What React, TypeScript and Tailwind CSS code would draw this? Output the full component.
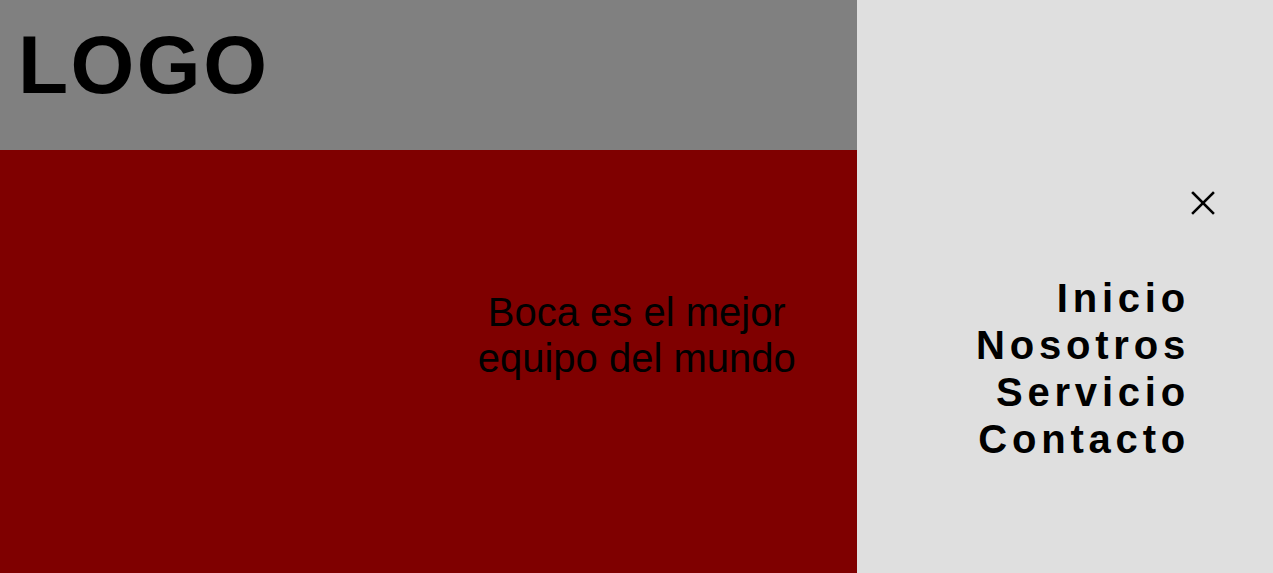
import React from "react";

export default function App() {
  return (
    <div
      className="flex h-[573px] w-[1273px] overflow-hidden"
      style={{ fontFamily: '"Liberation Sans", Arial, sans-serif' }}
    >
      <div className="flex w-[857px] flex-col">
        <header className="h-[150px] bg-[#808080] pl-[18px] pt-[18px]">
          <h1 className="text-[82px] font-bold leading-[1.15] tracking-[2.5px] text-black">
            LOGO
          </h1>
        </header>
        <main className="grid flex-1 grid-cols-2 bg-[#7f0000] pt-[139px]">
          <div />
          <p className="pr-[12px] text-center text-[40px] leading-[1.15] text-black">
            Boca es el mejor
            <br />
            equipo del mundo
          </p>
        </main>
      </div>
      <aside className="flex flex-1 flex-col bg-[#dfdfdf] pt-[191px]">
        <div className="flex justify-end pr-[58px]">
          <svg width="24" height="24" viewBox="0 0 24 24" fill="none" stroke="black" strokeWidth="2.6" strokeLinecap="square">
            <line x1="2" y1="2" x2="22" y2="22" />
            <line x1="22" y1="2" x2="2" y2="22" />
          </svg>
        </div>
        <nav className="mt-[60px] flex flex-col items-end pr-[83px] text-[40px] font-bold leading-[47px] tracking-[4.8px] text-black">
          <a>Inicio</a>
          <a>Nosotros</a>
          <a>Servicio</a>
          <a>Contacto</a>
        </nav>
      </aside>
    </div>
  );
}
